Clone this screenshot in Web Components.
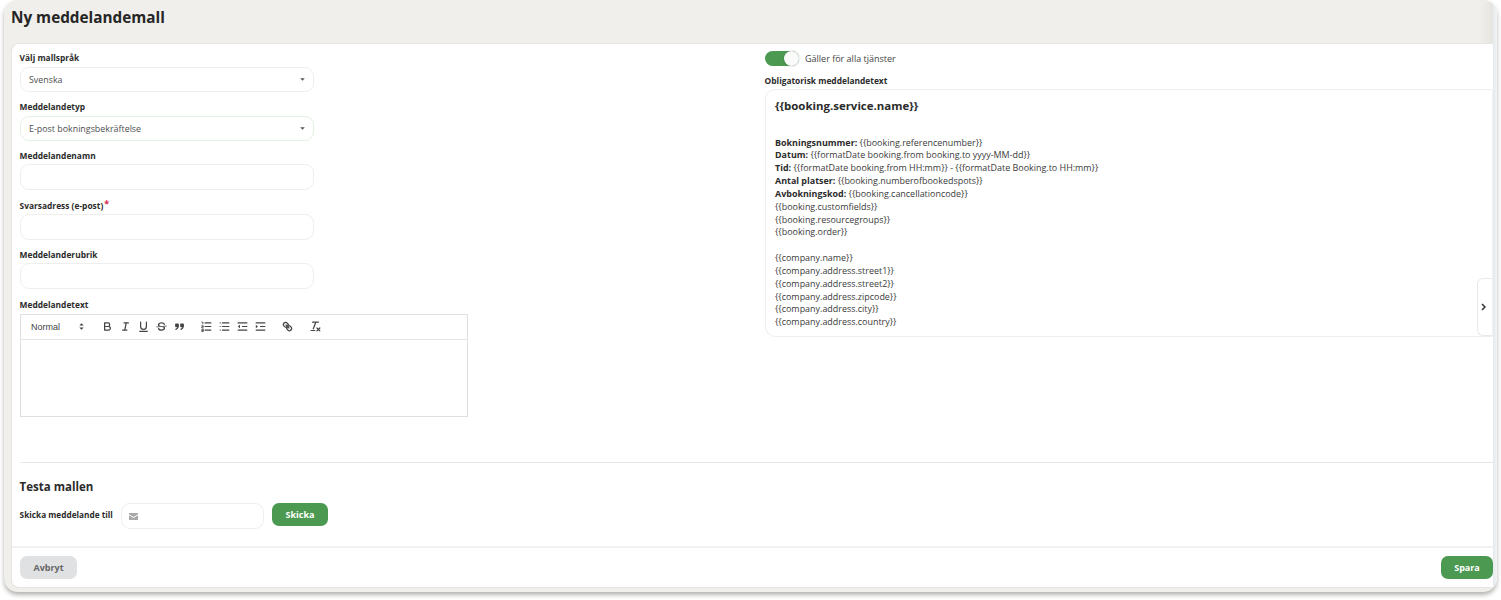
<!DOCTYPE html>
<html lang="sv"><head><meta charset="utf-8"><title>Ny meddelandemall</title>
<style>
html,body{margin:0;background:#fff;height:600px;overflow:hidden}
body{font-family:"Open Sans",sans-serif;font-size:9px;color:#2b2b2b}
</style></head><body>
<app-window>
  <span slot="title">Ny meddelandemall</span>
  <div slot="left">
    <form-field label="Välj mallspråk" gap="3" after="9.5"><select-box>Svenska</select-box></form-field>
    <form-field label="Meddelandetyp" gap="3" after="9.5"><select-box accent>E-post bokningsbekräftelse</select-box></form-field>
    <form-field label="Meddelandenamn" gap="2" after="9.5"><text-box></text-box></form-field>
    <form-field label="Svarsadress (e-post)" required gap="2" after="9.5"><text-box></text-box></form-field>
    <form-field label="Meddelanderubrik" gap="2" after="9.5"><text-box></text-box></form-field>
    <form-field label="Meddelandetext" gap="3" after="0"><rich-editor></rich-editor></form-field>
  </div>
  <div slot="right">
    <toggle-switch>Gäller för alla tjänster</toggle-switch>
    <form-field label="Obligatorisk meddelandetext" gap="2" after="0"><template-preview></template-preview></form-field>
  </div>
  <test-row slot="test"></test-row>
  <action-button slot="cancel" kind="grey">Avbryt</action-button>
  <action-button slot="save" kind="green">Spara</action-button>
</app-window>
<script>
const def=(name,css,html)=>{
  customElements.define(name,class extends HTMLElement{
    constructor(){super();this.attachShadow({mode:'open'}).innerHTML='<style>'+css+'</style>'+(typeof html==='function'?html(this):html);}
  });
};
def('app-window',`
:host{display:flex;height:592px;margin:0 4px;border-radius:14px;background:#f0efec;box-shadow:0 3px 4px rgba(90,90,85,.45);overflow:hidden;box-sizing:border-box}
.main{flex:1;min-width:0;display:flex;flex-direction:column;padding:0 0 4px 7px}
.strip{width:4px;background:linear-gradient(90deg,#e4e9ec,#f2f5f6)}
header{height:43px;display:flex;align-items:center;font-size:15.3px;font-weight:700;color:#262626;padding-bottom:10px;box-sizing:border-box;flex:none;background:linear-gradient(90deg,transparent calc(100% - 14px),#e6e5e1)}
.panel{flex:1;background:#fff;border-radius:8px 0 0 8px;border:1px solid #e6e5e1;border-right:0;display:flex;flex-direction:column;box-sizing:border-box;min-height:0}
.cols{display:grid;grid-template-columns:745px 1fr;height:418px;padding:8px 0 0 8px;box-sizing:border-box;flex:none}
.test{margin-left:8px;border-top:1px solid #e8e8e6;flex:none;height:84px;box-sizing:border-box}
footer{flex:1;border-top:2px solid #f1f1ef;display:flex;justify-content:space-between;align-items:flex-start;padding:8px 0 0 8px}
`,`<div class="main"><header><slot name="title"></slot></header>
<div class="panel"><div class="cols"><div><slot name="left"></slot></div><div><slot name="right"></slot></div></div>
<div class="test"><slot name="test"></slot></div>
<footer><slot name="cancel"></slot><slot name="save"></slot></footer></div></div><div class="strip"></div>`);
def('form-field',`
:host{display:block}
label{display:block;font-size:8.4px;font-weight:700;line-height:12px;color:#2b2b2b;margin-left:-.4px}
i{font-style:normal;color:#d8234a;font-size:9px;line-height:8px;vertical-align:top;margin-left:1px}
`,h=>`<label>${h.getAttribute('label')}${h.hasAttribute('required')?'<i>*</i>':''}</label><div style="margin-top:${h.getAttribute('gap')}px;margin-bottom:${h.getAttribute('after')}px"><slot></slot></div>`);
def('select-box',`
:host{display:flex;align-items:center;justify-content:space-between;width:294px;height:24.5px;box-sizing:border-box;border:1px solid #eeeeec;border-radius:9px;padding:0 8px 0 8px;font-size:8.9px;color:#505050;background:#fff}
:host([accent]){border-color:#e3f0e3}
svg{display:block}
`,`<slot></slot><svg width="5" height="3" viewBox="0 0 6 4"><path d="M0 .3h6L3 3.700z" fill="#555"/></svg>`);
def('text-box',`:host{display:block;width:294px;height:26px;box-sizing:border-box;border:1px solid #eeeeec;border-radius:9px;background:#fff}`,``);
def('rich-editor',`
:host{display:block;width:448px;height:103px;box-sizing:border-box;border:1px solid #dfdfdf;background:#fff}
.bar{height:25px;border-bottom:1px solid #e4e4e4;display:flex;align-items:center;box-sizing:border-box;color:#444}
.bar>*{flex:none}
.fmt{font-family:"Liberation Sans",sans-serif;font-size:9px;color:#444;margin-left:10px;width:43.5px}
svg{display:block;width:13px;height:13px;fill:none;stroke:#444;stroke-width:1.7;margin-left:5px;stroke-linecap:round;stroke-linejoin:round}
.f{fill:#444;stroke:none}
.t{stroke-width:1.200}
`,`<div class="bar"><span class="fmt">Normal</span>
<svg viewBox="0 0 18 18" style="margin-left:0"><path class="f" d="M6 10.500 9 13.500 12 10.500zM6 7.500 9 4.500 12 7.500z"/></svg>
<svg viewBox="0 0 18 18" style="margin-left:13px"><path d="M5,4H9.5A2.5,2.5,0,0,1,12,6.500v0A2.5,2.5,0,0,1,9.5,9H5V4Z"/><path d="M5,9h5.5A2.5,2.5,0,0,1,13,11.500v0A2.5,2.5,0,0,1,10.5,14H5V9Z"/></svg>
<svg viewBox="0 0 18 18"><path d="M7 4H13M5 14H11M8 14 10 4"/></svg>
<svg viewBox="0 0 18 18"><path d="M5,3V9a4,4,0,0,0,4,4H9a4,4,0,0,0,4-4V3"/><rect class="f" height="1.500" rx=".5" width="12" x="3" y="15"/></svg>
<svg viewBox="0 0 18 18"><path class="t" d="M15.500 8.500 2.500 9.500"/><path class="f" d="M9.007,8C6.542,7.791,6,7.519,6,6.500,6,5.792,7.283,5,9,5c1.571,0,2.765.679,2.969,1.309a1,1,0,0,0,1.900-.617C13.356,4.106,11.354,3,9,3,6.200,3,4,4.538,4,6.500a3.200,3.200,0,0,0,.5,1.843Z"/><path class="f" d="M8.984,10C11.457,10.208,12,10.479,12,11.500c0,.708-1.283,1.500-3,1.500-1.571,0-2.765-.679-2.969-1.309a1,1,0,1,0-1.900.617C4.644,13.894,6.646,15,9,15c2.800,0,5-1.538,5-3.500a3.200,3.200,0,0,0-.5-1.843Z"/></svg>
<svg viewBox="0 0 18 18"><rect class="f" height="5" rx="1" width="5" x="3" y="5"/><rect class="f" height="5" rx="1" width="5" x="10" y="5"/><path d="M7,8c0,4.031-3,5-3,5M14,8c0,4.031-3,5-3,5"/></svg>
<svg viewBox="0 0 18 18" style="margin-left:14px"><path d="M7 4H15M7 9H15M7 14H15"/><path class="t" d="M2.500 3H4V5.500M2.500 8H4.500V9.500H2.500V11H4.500M2.500 13H4.500V16H2.500M2.500 14.500H4.500"/></svg>
<svg viewBox="0 0 18 18"><path d="M6 4H15M6 9H15M6 14H15M3 4H3M3 9H3M3 14H3"/></svg>
<svg viewBox="0 0 18 18"><path d="M3 14H15M3 4H15M9 9H15"/><path class="f" d="M5.500 6.500V11.500L2.500 9z"/></svg>
<svg viewBox="0 0 18 18"><path d="M3 14H15M3 4H15M9 9H15"/><path class="f" d="M2.500 6.500V11.500L5.500 9z"/></svg>
<svg viewBox="0 0 18 18" style="margin-left:14px"><path d="M7 7 11 11"/><path d="M8.900,4.577a3.476,3.476,0,0,1,.36,4.679A3.476,3.476,0,0,1,4.577,8.900C3.185,7.500,2.035,6.400,4.217,4.217S7.500,3.185,8.900,4.577Z"/><path d="M13.423,9.100a3.476,3.476,0,0,0-4.679-.36,3.476,3.476,0,0,0,.36,4.679c1.392,1.392,2.500,2.542,4.679.36S14.815,10.500,13.423,9.100Z"/></svg>
<svg viewBox="0 0 18 18" style="margin-left:15px"><path d="M5 3H13M6 12 9.350 3M11 11 15 15M15 11 11 15"/><rect class="f" height="1.200" rx=".5" width="7" x="2" y="14"/></svg>
</div><div></div>`);
def('toggle-switch',`
:host{display:flex;align-items:center;height:15px;font-size:9px;color:#444;margin:-1px 0 9px}
.t{width:34px;height:15px;border-radius:8px;background:#4c9a52;position:relative;margin-right:6px;flex:none}
.k{position:absolute;right:0;top:0;width:15px;height:15px;border-radius:50%;background:#fafafa;box-shadow:0 0 2px rgba(0,0,0,.25)}
`,`<span class="t"><span class="k"></span></span><slot></slot>`);
def('template-preview',`
:host{display:block;position:relative;height:247.5px;box-sizing:border-box;border:1px solid #eeeeec;border-right:1px solid #f1f1f1;border-radius:10px 0 0 10px;padding:7px 9px;font-size:8.95px;line-height:12.85px;color:#3a3a3a;background:#fff}
h3{margin:0 0 21.5px;font-size:11.45px;line-height:18px;font-weight:700;color:#2b2b2b}
b{font-weight:700;color:#2b2b2b}
p{margin:0}
.gap{height:12.85px}
.handle{position:absolute;right:0;top:188px;width:15px;height:58px;box-sizing:border-box;border:1px solid #e9e9e7;border-right:0;border-radius:6px 0 0 6px;background:#fff;display:flex;align-items:center;justify-content:flex-end;padding-right:6px}
`,`<h3>{{booking.service.name}}</h3>
<p><b>Bokningsnummer:</b> {{booking.referencenumber}}</p>
<p><b>Datum:</b> {{formatDate booking.from booking.to yyyy-MM-dd}}</p>
<p><b>Tid:</b> {{formatDate booking.from HH:mm}} - {{formatDate Booking.to HH:mm}}</p>
<p><b>Antal platser:</b> {{booking.numberofbookedspots}}</p>
<p><b>Avbokningskod:</b> {{booking.cancellationcode}}</p>
<p>{{booking.customfields}}</p>
<p>{{booking.resourcegroups}}</p>
<p>{{booking.order}}</p>
<div class="gap"></div>
<p>{{company.name}}</p>
<p>{{company.address.street1}}</p>
<p>{{company.address.street2}}</p>
<p>{{company.address.zipcode}}</p>
<p>{{company.address.city}}</p>
<p>{{company.address.country}}</p>
<div class="handle"><svg width="5" height="8" viewBox="0 0 5 8"><path d="M1 1l3 3-3 3" fill="none" stroke="#333" stroke-width="1.500"/></svg></div>`);
def('test-row',`
:host{display:block;padding-top:16px}
h2{margin:0 0 8px -.4px;font-size:11.5px;line-height:16px;font-weight:700;color:#2b2b2b}
.r{display:flex;align-items:flex-start}
label{font-size:8.25px;font-weight:700;line-height:24px;width:101px;flex:none;white-space:nowrap;margin-left:-.4px;margin-right:.4px}
.in{width:143px;height:26px;box-sizing:border-box;border:1px solid #eeeeec;border-radius:9px;display:flex;align-items:center;padding-left:7px;margin-right:8px}
`,`<h2>Testa mallen</h2><div class="r"><label>Skicka meddelande till</label><div class="in"><svg width="9" height="7" viewBox="0 0 9 7"><path d="M0 0h9v1.200L4.500 4 0 1.200zM0 2.200l4.500 2.800L9 2.200V7H0z" fill="#a8a8a8"/></svg></div><action-button kind="green">Skicka</action-button></div>`);
def('action-button',`
:host{display:inline-flex;align-items:center;justify-content:center;height:23px;border-radius:7px;font-size:9px;font-weight:700;box-sizing:border-box}
:host([kind=green]){background:#4c9a52;color:#fff;width:56px}
:host([kind=grey]){background:#e0e1e3;color:#666;width:57px}
:host([slot=save]){width:52px}
`,`<slot></slot>`);
</script>
</body></html>
